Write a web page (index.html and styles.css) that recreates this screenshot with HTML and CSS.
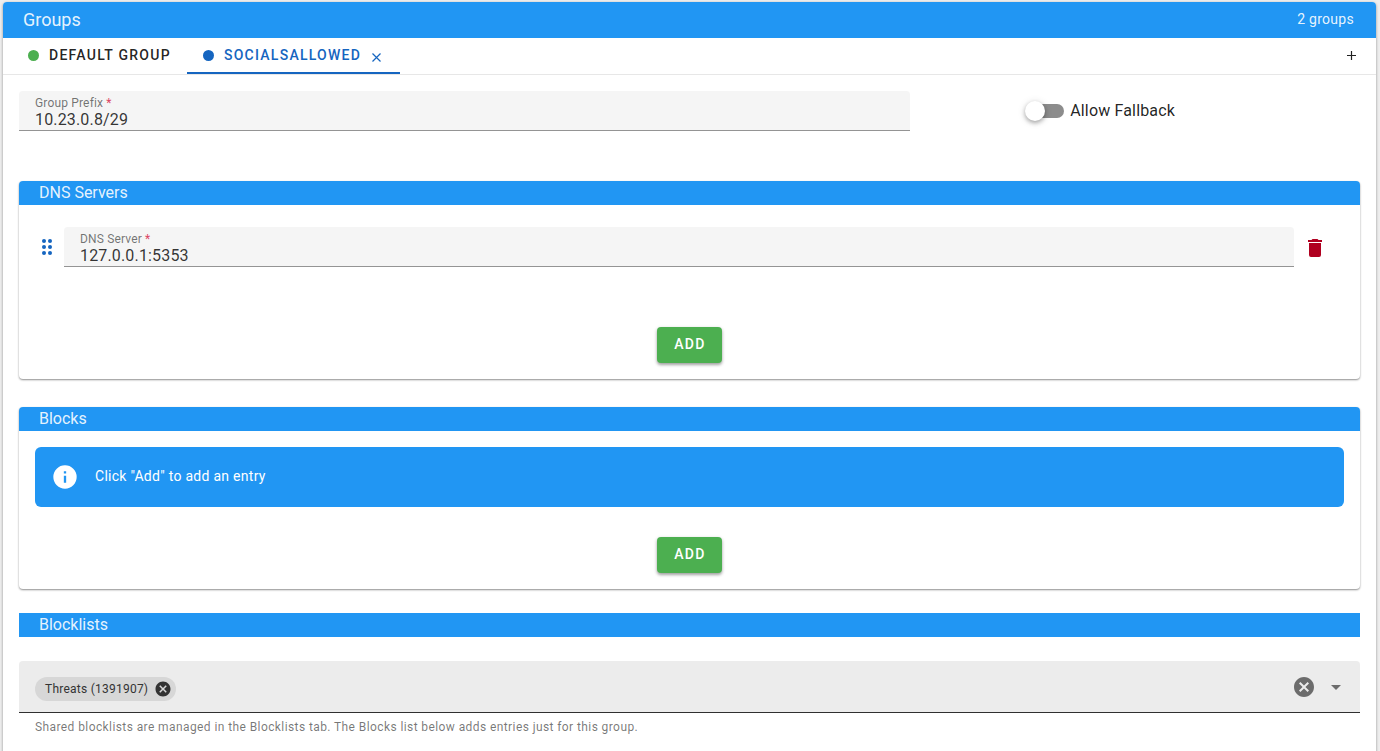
FILE: index.html
```
<!DOCTYPE html>
<html lang="en">
	<head>
		<meta charset="UTF-8" />
		<meta name="viewport" content="initial-scale=1,width=device-width" />
		<title>Groups</title>
		<link rel="stylesheet" href="styles.css">
	</head>

	<body>
		<main class="groups">
			<header class="groups-header">
				<h1 class="groups-title">Groups</h1>
				<span class="groups-count">2 groups</span>
			</header>

			<nav class="tabs">
				<div class="tab">
					<button class="tab-button" type="button"><span class="dot dot_green"></span>Default Group</button>
				</div>
				<div class="tab tab_active">
					<button class="tab-button" type="button"><span class="dot"></span>SocialsAllowed</button>
					<button class="icon-button tab-close" type="button" aria-label="Close tab">
						<svg width="11" height="11" viewBox="0 0 11 11"><path d="M1.5 1.5l8 8M9.500 1.500l-8 8" stroke="currentColor" stroke-width="1.2" fill="none" /></svg>
					</button>
				</div>
				<button class="icon-button tab-add" type="button" aria-label="Add group">
					<svg width="11" height="11" viewBox="0 0 11 11"><path d="M5.500 1v9M1 5.500h9" stroke="currentColor" stroke-width="1.200" fill="none" /></svg>
				</button>
			</nav>

			<div class="groups-body">
				<div class="settings">
					<div class="field">
						<label class="field-label" for="prefix">Group Prefix <span class="required">*</span></label>
						<input class="field-input" id="prefix" type="text" value="10.23.0.8/29" />
					</div>
					<label class="switch">
						<input class="switch-input" type="checkbox" />
						Allow Fallback
					</label>
				</div>

				<section class="card">
					<h2 class="bar">DNS Servers</h2>
					<div class="server">
						<button class="icon-button server-drag" type="button" aria-label="Move server">
							<svg width="12" height="18" viewBox="0 0 12 18" fill="currentColor">
								<circle cx="3" cy="3" r="2" /><circle cx="9" cy="3" r="2" />
								<circle cx="3" cy="9" r="2" /><circle cx="9" cy="9" r="2" />
								<circle cx="3" cy="15" r="2" /><circle cx="9" cy="15" r="2" />
							</svg>
						</button>
						<div class="field">
							<label class="field-label" for="server">DNS Server <span class="required">*</span></label>
							<input class="field-input" id="server" type="text" value="127.0.0.1:5353" />
						</div>
						<button class="icon-button server-delete" type="button" aria-label="Delete server">
							<svg width="24" height="24" viewBox="0 0 24 24" fill="currentColor"><path d="M19 4h-3.500l-1-1h-5l-1 1H5v2h14M6 19a2 2 0 0 0 2 2h8a2 2 0 0 0 2-2V7H6v12z" /></svg>
						</button>
					</div>
					<button class="add-button" type="button">Add</button>
				</section>

				<section class="card card_blocks">
					<h2 class="bar">Blocks</h2>
					<div class="alert">
						<svg width="28" height="28" viewBox="0 0 24 24" fill="currentColor"><path d="M13 9h-2V7h2m0 10h-2v-6h2m-1-9A10 10 0 0 0 2 12a10 10 0 0 0 10 10 10 10 0 0 0 10-10A10 10 0 0 0 12 2z" /></svg>
						<span class="alert-text">Click "Add" to add an entry</span>
					</div>
					<button class="add-button" type="button">Add</button>
				</section>

				<section class="blocklists">
					<h2 class="bar bar_square">Blocklists</h2>
					<div class="chip-select">
						<span class="chip">
							Threats (1391907)
							<button class="icon-button" type="button" aria-label="Remove Threats">
								<svg width="18" height="18" viewBox="0 0 24 24" fill="currentColor"><path d="M12 2C6.470 2 2 6.470 2 12s4.470 10 10 10 10-4.470 10-10S17.530 2 12 2m5 13.590L15.590 17 12 13.410 8.410 17 7 15.590 10.590 12 7 8.410 8.410 7 12 10.590 15.590 7 17 8.410 13.410 12 17 15.590z" /></svg>
							</button>
						</span>
						<input class="chip-input" type="text" role="combobox" aria-expanded="false" aria-label="Blocklists" aria-describedby="blocklists-hint" />
						<button class="icon-button clear-button" type="button" aria-label="Clear blocklists">
							<svg width="24" height="24" viewBox="0 0 24 24" fill="currentColor"><path d="M12 2C6.470 2 2 6.470 2 12s4.470 10 10 10 10-4.470 10-10S17.530 2 12 2m5 13.590L15.590 17 12 13.410 8.410 17 7 15.590 10.590 12 7 8.410 8.410 7 12 10.590 15.590 7 17 8.410 13.410 12 17 15.590z" /></svg>
						</button>
						<button class="icon-button menu-button" type="button" aria-label="Open blocklists">
							<svg width="24" height="24" viewBox="0 0 24 24" fill="currentColor"><path d="M7 10l5 5 5-5H7z" /></svg>
						</button>
					</div>
					<p class="hint" id="blocklists-hint">Shared blocklists are managed in the Blocklists tab. The Blocks list below adds entries just for this group.</p>
				</section>
			</div>
		</main>
	</body>
</html>
```

FILE: styles.css
```
html {
	box-sizing: border-box;
}

*,
*::after,
*::before {
	box-sizing: inherit;
}

body {
	margin: 0;
	padding: 2px 4px 0 3px;
	background-color: #eee;
	color: rgb(0 0 0 / 87%);
	font-family: Roboto, sans-serif;
	font-size: 16px;
	line-height: 24px;
}

button,
input {
	margin: 0;
	padding: 0;
	border: 0;
	background: none;
	color: inherit;
	font: inherit;
}

button {
	cursor: pointer;
}

svg {
	display: block;
	flex-shrink: 0;
}

.groups {
	min-height: calc(100vh - 2px);
	background-color: white;
	border-radius: 4px 4px 0 0;
	box-shadow: 0 1px 3px rgb(0 0 0 / 40%);
}

.groups-header {
	display: flex;
	align-items: center;
	justify-content: space-between;
	height: 36px;
	padding: 0 22px 0 20px;
	background-color: #2196f3;
	border-radius: 4px 4px 0 0;
	color: rgb(255 255 255 / 90%);
}

.groups-title {
	margin: 0;
	font-size: 18px;
	font-weight: 400;
}

.groups-count {
	padding-bottom: 2px;
	font-size: 14px;
	letter-spacing: 0.02em;
}

.tabs {
	display: flex;
	height: 37px;
	border-bottom: 1px solid #e7e7e7;
}

.tab {
	display: flex;
	align-items: center;
	padding: 0 16px 0 25px;
	border-bottom: 2px solid transparent;
}

.tab_active {
	padding: 0 18px 0 16px;
	border-color: #1565c0;
	color: #1565c0;
}

.tab-button {
	display: flex;
	align-items: center;
	gap: 10px;
	font-size: 14px;
	font-weight: 500;
	letter-spacing: 0.09em;
	text-transform: uppercase;
}

.dot {
	width: 11px;
	height: 11px;
	border-radius: 50%;
	background-color: #1565c0;
}

.dot_green {
	background-color: #4caf50;
}

.icon-button {
	display: flex;
	align-items: center;
	justify-content: center;
}

.tab-close {
	margin: 4px 0 0 10px;
}

.tab-add {
	margin-left: auto;
	padding: 0 19px 2px 0;
}

.groups-body {
	padding: 16px;
}

.settings {
	display: grid;
	grid-template-columns: 2fr 1fr;
	align-items: center;
	gap: 4px;
	margin-bottom: 50px;
}

.field {
	flex-grow: 1;
	height: 40px;
	padding: 4px 16px 0;
	background-color: #f5f5f5;
	border-bottom: 1px solid #949494;
	border-radius: 4px 4px 0 0;
	letter-spacing: 0.01em;
}

.field-label {
	display: block;
	color: rgb(0 0 0 / 55%);
	font-size: 12px;
	line-height: 16px;
}

.required {
	color: #dc4664;
}

.field-input {
	display: block;
	width: 100%;
	height: 16px;
	color: rgb(0 0 0 / 80%);
	letter-spacing: inherit;
	line-height: 16px;
	outline: none;
}

.switch {
	display: flex;
	align-items: center;
	gap: 6px;
	padding-left: 26%;
	letter-spacing: 0.01em;
}

.switch-input {
	position: relative;
	width: 34px;
	height: 14px;
	border-radius: 7px;
	background-color: #8c8c8c;
	appearance: none;
}

.switch-input::before {
	content: "";
	position: absolute;
	top: -3px;
	left: -5px;
	width: 20px;
	height: 20px;
	border-radius: 50%;
	background-color: white;
	box-shadow: 0 2px 4px rgb(0 0 0 / 30%), 0 1px 8px rgb(0 0 0 / 12%);
}

.switch-input:checked::before {
	left: 18px;
	background-color: #1565c0;
}

.card {
	display: flex;
	flex-direction: column;
	padding-bottom: 16px;
	border-radius: 4px;
	box-shadow: 0 1px 2px rgb(0 0 0 / 45%);
}

.card_blocks {
	margin-top: 28px;
}

.bar {
	margin: 0;
	padding: 0 20px;
	background-color: #2196f3;
	border-radius: 4px 4px 0 0;
	color: rgb(255 255 255 / 90%);
	font-size: 16px;
	font-weight: 400;
	line-height: 24px;
}

.bar_square {
	border-radius: 0;
}

.server {
	display: flex;
	align-items: center;
	padding: 22px 33px 60px 22px;
}

.server-drag {
	margin-right: 11px;
	color: #1565c0;
}

.server-delete {
	margin-left: 9px;
	padding-top: 2px;
	color: #b00020;
}

.add-button {
	align-self: center;
	height: 36px;
	padding: 0 16px 2px 17px;
	border-radius: 4px;
	background-color: #4caf50;
	box-shadow: 0 2px 3px rgb(0 0 0 / 30%), 0 1px 4px rgb(0 0 0 / 12%);
	color: white;
	font-size: 14px;
	font-weight: 500;
	letter-spacing: 0.09em;
	text-transform: uppercase;
}

.alert {
	display: flex;
	align-items: center;
	gap: 16px;
	min-height: 60px;
	margin: 16px 16px 30px;
	padding: 0 16px;
	border-radius: 6px;
	background-color: #2196f3;
	color: white;
	font-size: 14px;
	letter-spacing: 0.02em;
}

.alert-text {
	padding-bottom: 2px;
}

.blocklists {
	margin-top: 24px;
}

.chip-select {
	display: flex;
	align-items: center;
	height: 52px;
	margin-top: 24px;
	padding: 0 12px 0 16px;
	background-color: #ececec;
	border-bottom: 1px solid #303030;
	border-radius: 4px 4px 0 0;
	color: rgb(0 0 0 / 54%);
}

.chip {
	display: flex;
	align-items: center;
	gap: 6px;
	height: 24px;
	margin-top: 4px;
	padding: 0 4px 0 10px;
	border-radius: 12px;
	background-color: #d7d7d7;
	color: #333;
	font-size: 12px;
	letter-spacing: 0.02em;
}

.chip-input {
	flex-grow: 1;
	min-width: 0;
	outline: none;
}

.clear-button {
	margin-right: 8px;
}

.hint {
	margin: 4px 16px 0;
	color: rgb(0 0 0 / 54%);
	font-size: 12px;
	line-height: 20px;
	letter-spacing: 0.034em;
}
```
